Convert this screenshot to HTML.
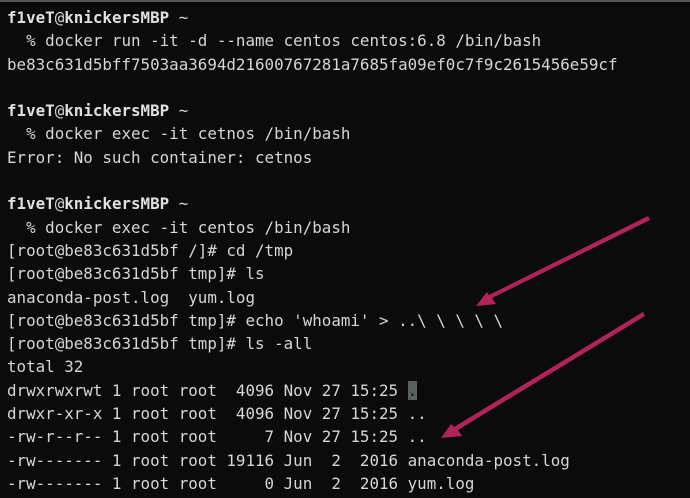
<!DOCTYPE html>
<html><head><meta charset="utf-8"><style>
html,body{margin:0;padding:0;background:#0b0b0b;}
body{width:690px;height:496px;overflow:hidden;position:relative;border-top:2px solid #555;box-sizing:border-box;}
pre{position:absolute;left:7px;top:4px;margin:0;font-family:"DejaVu Sans Mono","Liberation Mono",monospace;font-size:15.85px;line-height:23.3px;color:#d6d6d6;letter-spacing:0;}
b{font-weight:bold;color:#e0e0e0}
.cur{background:#5a615c;color:#111}
svg{position:absolute;left:0;top:0}
</style></head><body>
<pre><b>f1veT</b>@<b>knickersMBP</b> ~
  % docker run -it -d --name centos centos:6.8 /bin/bash
be83c631d5bff7503aa3694d21600767281a7685fa09ef0c7f9c2615456e59cf

<b>f1veT</b>@<b>knickersMBP</b> ~
  % docker exec -it cetnos /bin/bash
Error: No such container: cetnos

<b>f1veT</b>@<b>knickersMBP</b> ~
  % docker exec -it centos /bin/bash
[root@be83c631d5bf /]# cd /tmp
[root@be83c631d5bf tmp]# ls
anaconda-post.log  yum.log
[root@be83c631d5bf tmp]# echo 'whoami' &gt; ..\ \ \ \ \
[root@be83c631d5bf tmp]# ls -all
total 32
drwxrwxrwt 1 root root  4096 Nov 27 15:25 <span class="cur">.</span>
drwxr-xr-x 1 root root  4096 Nov 27 15:25 ..
-rw-r--r-- 1 root root     7 Nov 27 15:25 ..
-rw------- 1 root root 19116 Jun  2  2016 anaconda-post.log
-rw------- 1 root root     0 Jun  2  2016 yum.log</pre>
<svg width="690" height="496">
<polygon points="648,214 650,218 492,296 496,302 476,304 487,290 489,293" fill="#b0245a"/>
<polygon points="643,310 645,314 458,428 462,434 441,436 451,422 454,425" fill="#b0245a"/>
</svg>
</body></html>
